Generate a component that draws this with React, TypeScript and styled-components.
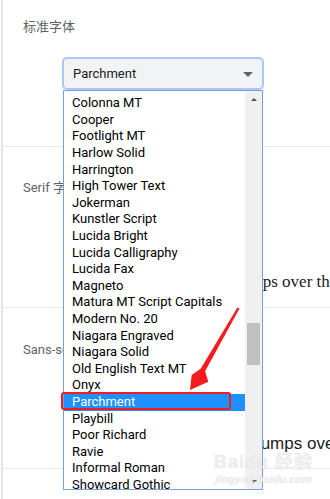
import styled, { createGlobalStyle } from 'styled-components'

const GlobalStyle = createGlobalStyle`
  html, body {
    margin: 0;
    padding: 0;
    background: #fff;
  }
  body {
    font-family: Roboto, 'Noto Sans CJK SC', sans-serif;
  }
`

const Page = styled.div`
  position: relative;
  width: 330px;
  height: 499px;
  overflow: hidden;
  background: linear-gradient(to right, #fff 1px, #e6e6e6 1px, #e6e6e6 3px, #fff 3px);
`

const Section = styled.section<{ $top: number; $bottom: number }>`
  margin-left: 3px;
  padding: ${(p) => p.$top}px 0 ${(p) => p.$bottom}px 20px;
  border-bottom: 1px solid #e8eaed;
`

const Label = styled.div`
  font-size: 13px;
  line-height: 20px;
  color: #5f6368;
  white-space: nowrap;
`

const FontSelect = styled.div`
  box-sizing: border-box;
  width: 202px;
  height: 33px;
  margin: 20px 0 0 39px;
  padding: 0 9px 0 9px;
  display: flex;
  align-items: center;
  justify-content: space-between;
  background: #f1f3f4;
  border: 2px solid #aac8f8;
  border-radius: 5px;
  font-size: 13px;
  color: #202124;
`

const Caret = styled.span`
  width: 0;
  height: 0;
  border-left: 5px solid transparent;
  border-right: 5px solid transparent;
  border-top: 5px solid #5f6368;
  margin-top: 2px;
`

const Sample = styled.div<{ $serif?: boolean; $indent: number }>`
  margin-top: 74px;
  padding-left: ${(p) => p.$indent}px;
  font-family: ${(p) => (p.$serif ? "'Liberation Serif', serif" : "'Liberation Sans', sans-serif")};
  font-size: 17px;
  line-height: 20px;
  color: #202124;
  white-space: nowrap;
`

const Dropdown = styled.div`
  position: absolute;
  left: 63px;
  top: 90px;
  box-sizing: border-box;
  width: 200px;
  height: 400px;
  display: grid;
  grid-template-columns: 1fr 17px;
  background: #fff;
  border: 1px solid #7b9fdc;
  font-size: 13px;
  color: #000;
`

const OptionList = styled.div`
  padding-top: 4.3px;
  overflow: hidden;
`

const Option = styled.div<{ $selected?: boolean }>`
  height: 16.6px;
  line-height: 16.6px;
  padding-left: 8px;
  white-space: nowrap;
  background: ${(p) => (p.$selected ? '#1e90ff' : 'transparent')};
  color: ${(p) => (p.$selected ? '#fff' : '#000')};
`

const Scrollbar = styled.div`
  position: relative;
  background: #f0f0f0;
  display: flex;
  flex-direction: column;
  justify-content: space-between;
  align-items: center;
  padding: 7px 0 6px;
`

const ArrowUp = styled.span`
  width: 0;
  height: 0;
  border-left: 3.5px solid transparent;
  border-right: 3.5px solid transparent;
  border-bottom: 3.5px solid #505050;
`

const ArrowDown = styled(ArrowUp)`
  border-bottom: none;
  border-top: 3.5px solid #505050;
`

const Thumb = styled.div`
  position: absolute;
  left: 2px;
  top: 232px;
  width: 13px;
  height: 42px;
  background: #c1c1c1;
`

const RedBox = styled.div`
  position: absolute;
  left: 61px;
  top: 392px;
  width: 170px;
  height: 18px;
  box-sizing: border-box;
  border: 2px solid #f41c1c;
  border-radius: 3px;
`

const Pointer = styled.svg`
  position: absolute;
  left: 185px;
  top: 300px;
`

const Watermark = styled.div`
  position: absolute;
  left: 214px;
  top: 451px;
  display: flex;
  flex-direction: column;
  align-items: center;
  color: rgba(242, 242, 242, 0.85);
  text-shadow: 0 0 1px rgba(190, 190, 190, 0.55);
  font-family: 'Liberation Sans', 'Noto Sans CJK SC', sans-serif;
  pointer-events: none;
`

const MarkTitle = styled.div`
  font-size: 18px;
  font-weight: bold;
  line-height: 22px;
  letter-spacing: 1px;
`

const MarkUrl = styled.div`
  font-size: 11px;
  font-weight: bold;
  line-height: 12px;
  font-style: italic;
`

const fonts = [
  'Colonna MT',
  'Cooper',
  'Footlight MT',
  'Harlow Solid',
  'Harrington',
  'High Tower Text',
  'Jokerman',
  'Kunstler Script',
  'Lucida Bright',
  'Lucida Calligraphy',
  'Lucida Fax',
  'Magneto',
  'Matura MT Script Capitals',
  'Modern No. 20',
  'Niagara Engraved',
  'Niagara Solid',
  'Old English Text MT',
  'Onyx',
  'Parchment',
  'Playbill',
  'Poor Richard',
  'Ravie',
  'Informal Roman',
  'Showcard Gothic',
]

function App() {
  const selected = 'Parchment'
  return (
    <Page>
      <GlobalStyle />
      <Section $top={17} $bottom={56}>
        <Label>标准字体</Label>
        <FontSelect>
          <span>{selected}</span>
          <Caret />
        </FontSelect>
      </Section>
      <Section $top={31} $bottom={15}>
        <Label>Serif 字体</Label>
        <Sample $serif $indent={66}>
          The quick brown fox jumps over the lazy dog
        </Sample>
      </Section>
      <Section $top={32} $bottom={14}>
        <Label>Sans-serif 字体</Label>
        <Sample $indent={77}>The quick brown fox jumps over the lazy dog</Sample>
      </Section>

      <Dropdown>
        <OptionList>
          {fonts.map((f) => (
            <Option key={f} $selected={f === selected}>
              {f}
            </Option>
          ))}
        </OptionList>
        <Scrollbar>
          <ArrowUp />
          <Thumb />
          <ArrowDown />
        </Scrollbar>
      </Dropdown>

      <RedBox />
      <Pointer width="60" height="95" viewBox="0 0 60 95">
        <polygon
          points="54.5,8.6 52.4,7.6 15.7,68.8 6.7,75 5,90 23.3,81.7 20.1,71.2"
          fill="#f41c1c"
        />
      </Pointer>

      <Watermark>
        <MarkTitle>Baidu 经验</MarkTitle>
        <MarkUrl>jingyan.baidu.com</MarkUrl>
      </Watermark>
    </Page>
  )
}

export default App
